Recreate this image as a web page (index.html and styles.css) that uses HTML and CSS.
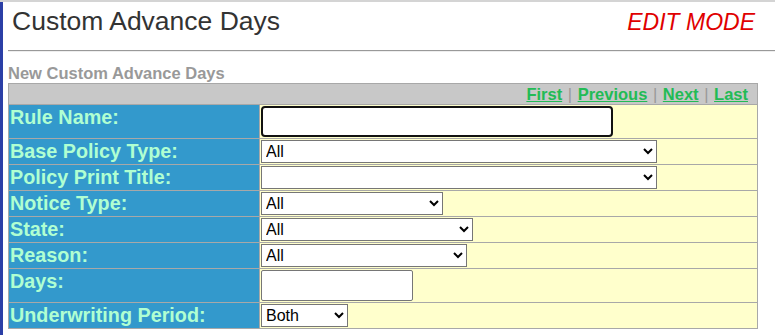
FILE: index.html
```html
<!DOCTYPE html>
<html lang="en">
<head>
    <meta charset="UTF-8">
    <title>Custom Advance Days</title>
    <link rel="stylesheet" href="styles.css">
</head>
<body>

    <div class="page">
        <div class="title-bar">
            <h1>Custom Advance Days</h1>
            <span class="mode">EDIT MODE</span>
        </div>
        <hr class="rule">

        <div class="section-title">New Custom Advance Days</div>
        <table class="form-table">
            <tr class="nav-row">
                <td colspan="2">
                    <a href="#">First</a> <span class="sep">|</span>
                    <a href="#">Previous</a> <span class="sep">|</span>
                    <a href="#">Next</a> <span class="sep">|</span>
                    <a href="#">Last</a>
                </td>
            </tr>
            <tr>
                <td class="label">Rule Name:</td>
                <td class="value"><input type="text" class="txt wide" autofocus></td>
            </tr>
            <tr>
                <td class="label">Base Policy Type:</td>
                <td class="value"><select class="sel w396"><option>All</option></select></td>
            </tr>
            <tr>
                <td class="label">Policy Print Title:</td>
                <td class="value"><select class="sel w396"><option></option></select></td>
            </tr>
            <tr>
                <td class="label">Notice Type:</td>
                <td class="value"><select class="sel w182"><option>All</option></select></td>
            </tr>
            <tr>
                <td class="label">State:</td>
                <td class="value"><select class="sel w212"><option>All</option></select></td>
            </tr>
            <tr>
                <td class="label">Reason:</td>
                <td class="value"><select class="sel w206"><option>All</option></select></td>
            </tr>
            <tr>
                <td class="label">Days:</td>
                <td class="value"><input type="text" class="txt short"></td>
            </tr>
            <tr>
                <td class="label">Underwriting Period:</td>
                <td class="value"><select class="sel w87"><option>Both</option></select></td>
            </tr>
        </table>
    </div>

</body>
</html>
```

FILE: styles.css
```css
html {
    border-top: 2px solid #d4d4d4;
}

body {
    margin: 0;
    font-family: "Liberation Sans", Arial, sans-serif;
    background: white;
}

.page {
    border-left: 3px solid #2b3fa6;
    padding-left: 5px;
    min-height: 333px;
}

.title-bar {
    display: flex;
    justify-content: space-between;
    align-items: baseline;
    padding: 4px 20px 0 4px;
    height: 38px;
}

h1 {
    margin: 0;
    font-size: 26.5px;
    font-weight: normal;
    color: #333;
}

.mode {
    color: #e00000;
    font-style: italic;
    font-size: 23px;
}

.rule {
    margin: 6px 0 0 0;
    border: none;
    border-top: 1px solid #999;
    border-bottom: 1px solid #eee;
}

.section-title {
    margin-top: 12px;
    font-size: 16.5px;
    line-height: 19px;
    font-weight: bold;
    color: #999;
    height: 19px;
}

.form-table {
    width: 750px;
    border-collapse: collapse;
}

.form-table td {
    border: 1px solid #a8a8a8;
    padding: 1px 1px;
}

.nav-row td {
    background: #c8c8c8;
    text-align: right;
    padding: 1px 9px 0 0;
    font-size: 16.5px;
    font-weight: bold;
    line-height: 19px;
    word-spacing: 1px;
}

.nav-row a {
    color: #22bb55;
}

.sep {
    color: #999;
    font-weight: normal;
}

.label {
    width: 248px;
    background: #3399cc;
    color: #b0ffd2;
    font-size: 19.8px;
    font-weight: bold;
    vertical-align: top;
    line-height: 22px;
}

.value {
    background: #ffffcc;
}

.txt {
    box-sizing: border-box;
    height: 31px;
    border: 1px solid #767676;
    border-radius: 2px;
    display: block;
    font-size: 16px;
}

.wide {
    width: 352px;
    border: 2px solid #111;
    border-radius: 4px;
    outline: none;
}

.short {
    width: 152px;
}

.sel {
    box-sizing: border-box;
    height: 23px;
    display: block;
    font-family: "Liberation Sans", Arial, sans-serif;
    font-size: 16px;
    border: 1px solid #767676;
    border-radius: 0;
    background: white;
    color: #000;
}

.w396 { width: 396px; }
.w182 { width: 182px; }
.w212 { width: 212px; }
.w206 { width: 206px; }
.w87 { width: 87px; }
```
